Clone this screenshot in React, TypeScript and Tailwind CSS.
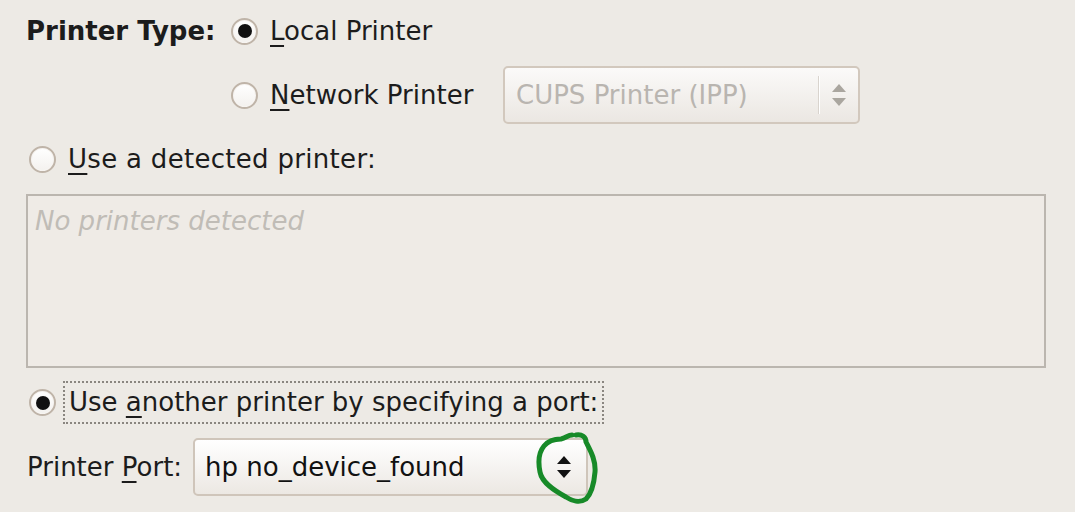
import React from "react";

const Radio: React.FC<{ checked?: boolean }> = ({ checked }) => (
  <span className="flex items-center justify-center w-[27px] h-[27px] rounded-full border-2 border-[#bfb4a8] bg-gradient-to-b from-[#ffffff] to-[#f3f1ee] shadow-[inset_0_0_0_1px_#f7f4f1] shrink-0">
    {checked && <span className="w-[14px] h-[14px] rounded-full bg-[#111]" />}
  </span>
);

const Arrows: React.FC<{ color: string }> = ({ color }) => (
  <svg width="18" height="26" viewBox="0 0 18 26">
    <polygon points="9,2 16,10 2,10" fill={color} />
    <polygon points="2,16 16,16 9,24" fill={color} />
  </svg>
);

const Mn: React.FC<{ c: string }> = ({ c }) => (
  <span className="underline underline-offset-[5px] decoration-[2px]">{c}</span>
);

export default function App() {
  return (
    <div
      className="w-[1075px] h-[512px] overflow-hidden bg-[#edeae5] text-[26px] text-[#1c1c1c] pl-[26px] flex flex-col"
      style={{ fontFamily: '"DejaVu Sans", "Liberation Sans", sans-serif' }}
    >
      {/* Printer type */}
      <div className="flex items-center h-[58px] mt-[2px]">
        <div className="w-[205px] font-bold">Printer Type:</div>
        <Radio checked />
        <span className="ml-[12px]">
          <Mn c="L" />ocal Printer
        </span>
      </div>
      <div className="flex items-center h-[58px] mt-[6px]">
        <div className="w-[205px]" />
        <Radio />
        <span className="ml-[12px] w-[233px]">
          <Mn c="N" />etwork Printer
        </span>
        <div className="flex items-center w-[357px] h-[58px] rounded-[5px] border-2 border-[#d2c8bd] bg-gradient-to-b from-[#fbfaf9] to-[#ebe7e2] pl-[11px]">
          <span className="flex-1 text-[#b9b5b0]">CUPS Printer (IPP)</span>
          <span className="w-[2px] h-[38px] bg-[#d9d4ce] border-r border-white" />
          <span className="w-[38px] flex justify-center">
            <Arrows color="#aaa69f" />
          </span>
        </div>
      </div>

      {/* detected printer */}
      <div className="flex items-center h-[40px] mt-[15px] pl-[3px]">
        <Radio />
        <span className="ml-[12px] tracking-[0.3px]">
          <Mn c="U" />se a detected printer:
        </span>
      </div>
      <div className="mt-[15px] w-[1020px] h-[174px] border-2 border-[#bbb6af] bg-[#efebe6] pl-[7px] pt-[6px]">
        <span className="italic text-[#c0bcb6]">No printers detected</span>
      </div>

      {/* another printer */}
      <div className="flex items-center h-[43px] mt-[13px] pl-[3px]">
        <Radio checked />
        <div className="ml-[7px] h-[43px] flex items-center px-[4px] border-2 border-dotted border-[#8a8680]">
          <span>
            Use <Mn c="a" />nother printer by specifying a port:
          </span>
        </div>
      </div>
      <div className="flex items-center h-[58px] mt-[14px] pl-[1px]">
        <span className="w-[166px]">
          Printer <Mn c="P" />ort:
        </span>
        <div className="relative flex items-center w-[395px] h-[58px] rounded-[5px] border-2 border-[#cfc5ba] bg-gradient-to-b from-[#ffffff] to-[#ece8e3] pl-[10px]">
          <span className="flex-1 text-[#111]">hp no_device_found</span>
          <span className="w-[44px] flex justify-center">
            <Arrows color="#111" />
          </span>
          <svg
            className="absolute left-[341px] top-[-9px]"
            width="66"
            height="74"
            viewBox="0 0 66 74"
          >
            <path
              d="M40 4 C46 3 50 6 50 11 C54 19 60 29 59 41 C58 53 55 63 50 68 C44 72 36 70 30 66 C19 60 6 52 4 41 C2 31 3 21 8 15 C12 10 19 8 25 8 C30 7 32 4 36 4"
              fill="none"
              stroke="#178a28"
              strokeWidth="5"
              strokeLinecap="round"
              strokeLinejoin="round"
            />
          </svg>
        </div>
      </div>
    </div>
  );
}
